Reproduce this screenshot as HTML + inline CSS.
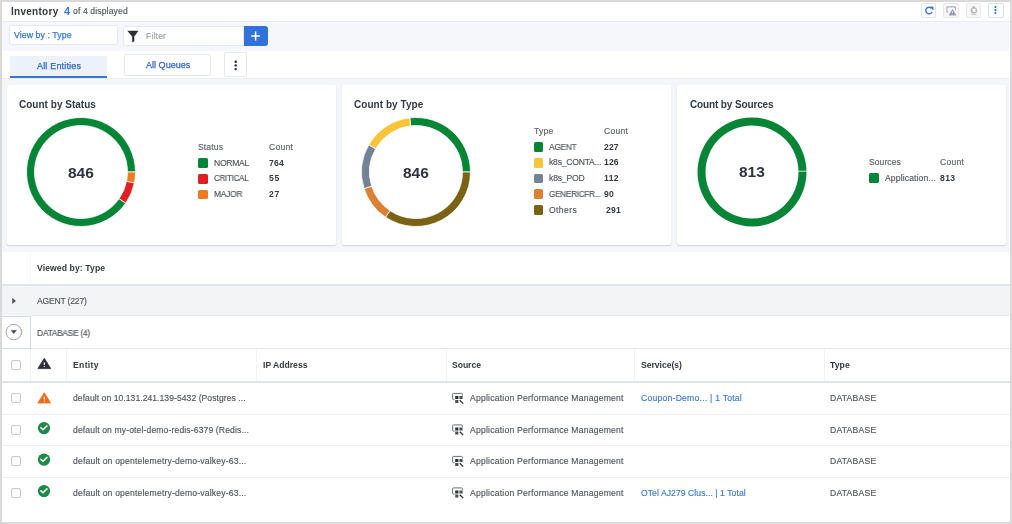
<!DOCTYPE html>
<html><head><meta charset="utf-8">
<style>
*{box-sizing:border-box;margin:0;padding:0}
html,body{width:1012px;height:524px;overflow:hidden;background:#d9d9d9;font-family:"Liberation Sans",sans-serif}
#app{position:absolute;left:2px;top:2px;width:1008px;height:520px;background:#fff;overflow:hidden}
.tx{position:absolute;line-height:1;white-space:nowrap;will-change:transform}
.bx{position:absolute}
</style></head>
<body>
<div id="app">
<div class="bx" style="left:0.00px;top:0.00px;width:1008.00px;height:19.00px;background:#fff"></div>
<div class="bx" style="left:0.00px;top:18.50px;width:1008.00px;height:1.00px;background:#e9ecf0"></div>
<div class="tx" style="left:8.80px;top:4.50px;font-size:10px;color:#333a44;font-weight:bold;letter-spacing:0.273px;">Inventory</div>
<div class="tx" style="left:61.70px;top:3.65px;font-size:11px;color:#3a78d6;font-weight:bold;">4</div>
<div class="tx" style="left:71.00px;top:5.49px;font-size:8.6px;color:#50565f;letter-spacing:0.125px;-webkit-text-stroke:0.15px #50565f;">of 4 displayed</div>
<div class="bx" style="left:919.30px;top:1.10px;width:15.20px;height:15.10px;border:1px solid #d9e4f7;border-radius:2px;background:#fff"></div>
<div class="bx" style="left:941.40px;top:1.10px;width:15.20px;height:15.10px;border:1px solid #e8e9eb;border-radius:2px;background:#f7f7f8"></div>
<div class="bx" style="left:964.20px;top:1.10px;width:15.20px;height:15.10px;border:1px solid #e8e9eb;border-radius:2px;background:#f7f7f8"></div>
<div class="bx" style="left:986.40px;top:1.10px;width:15.20px;height:15.10px;border:1px solid #d9e4f7;border-radius:2px;background:#fff"></div>
<div class="bx" style="left:0.00px;top:19.50px;width:1008.00px;height:29.50px;background:#f5f7fb"></div>
<div class="bx" style="left:7.30px;top:23.20px;width:108.50px;height:20.10px;background:#fff;border:1px solid #e6e9ee;border-radius:2px"></div>
<div class="tx" style="left:12.30px;top:28.72px;font-size:8.8px;color:#3a78d6;letter-spacing:0.053px;-webkit-text-stroke:0.25px #3a78d6">View by : Type</div>
<div class="bx" style="left:120.60px;top:24.00px;width:121.40px;height:19.80px;background:#fff;border:1px solid #e6e9ee;border-radius:2px 0 0 2px"></div>
<div class="tx" style="left:144.00px;top:29.99px;font-size:8.6px;color:#9ba1a9;letter-spacing:0.170px;-webkit-text-stroke:0.15px #9ba1a9;">Filter</div>
<div class="bx" style="left:241.70px;top:24.20px;width:23.90px;height:19.80px;background:#3372d9;border-radius:0 3px 3px 0"></div>
<div class="bx" style="left:0.00px;top:49.00px;width:1008.00px;height:27.00px;background:#fff"></div>
<div class="bx" style="left:8.30px;top:54.00px;width:96.80px;height:22.00px;background:#ecf1fa;border-bottom:2px solid #3a74d2"></div>
<div class="tx" style="left:35.00px;top:60.05px;font-size:9px;color:#2f65c4;letter-spacing:0.179px;-webkit-text-stroke:0.25px #2f65c4">All Entities</div>
<div class="bx" style="left:122.40px;top:51.60px;width:87.10px;height:22.20px;background:#fff;border:1px solid #e6e9ee;border-radius:2px"></div>
<div class="tx" style="left:144.20px;top:58.85px;font-size:9px;color:#2f65c4;letter-spacing:0.030px;-webkit-text-stroke:0.25px #2f65c4">All Queues</div>
<div class="bx" style="left:222.20px;top:50.40px;width:23.20px;height:24.40px;background:#fff;border:1px solid #e6e9ee;border-radius:2px"></div>
<div class="bx" style="left:0.00px;top:76.00px;width:1008.00px;height:174.00px;background:#f4f6fa"></div>
<div class="bx" style="left:0.00px;top:76.00px;width:1008.00px;height:1.20px;background:#eceef2"></div>
<div class="bx" style="left:5.00px;top:83.00px;width:329.00px;height:160.00px;background:#fff;border-radius:2px;box-shadow:0 1px 1.5px rgba(0,0,0,.15)"></div>
<div class="bx" style="left:340.00px;top:83.00px;width:329.00px;height:160.00px;background:#fff;border-radius:2px;box-shadow:0 1px 1.5px rgba(0,0,0,.15)"></div>
<div class="bx" style="left:675.00px;top:83.00px;width:329.00px;height:160.00px;background:#fff;border-radius:2px;box-shadow:0 1px 1.5px rgba(0,0,0,.15)"></div>
<div class="tx" style="left:17.20px;top:97.70px;font-size:10px;color:#333a44;font-weight:bold;letter-spacing:0.016px;">Count by Status</div>
<div class="tx" style="left:352.10px;top:97.70px;font-size:10px;color:#333a44;font-weight:bold;letter-spacing:0.041px;">Count by Type</div>
<div class="tx" style="left:687.50px;top:97.70px;font-size:10px;color:#333a44;font-weight:bold;letter-spacing:-0.132px;">Count by Sources</div>
<svg class="bx" style="left:18.50px;top:109.50px" width="120" height="120" viewBox="0 0 120 120"><path d="M104.70,91.18 A54.5,54.5 0 1 1 114.50,60.00 L106.50,60.00 A46.5,46.5 0 1 0 98.14,86.60 Z" fill="#068537" stroke="#fff" stroke-width="0.8"/>
<path d="M113.41,70.86 A54.5,54.5 0 0 1 104.70,91.18 L98.14,86.60 A46.5,46.5 0 0 0 105.57,69.26 Z" fill="#e01f22" stroke="#fff" stroke-width="0.8"/>
<path d="M114.50,60.00 A54.5,54.5 0 0 1 113.41,70.86 L105.57,69.26 A46.5,46.5 0 0 0 106.50,60.00 Z" fill="#f07a1e" stroke="#fff" stroke-width="0.8"/></svg>
<svg class="bx" style="left:353.60px;top:109.90px" width="120" height="120" viewBox="0 0 120 120"><path d="M53.74,5.86 A54.5,54.5 0 0 1 114.50,60.00 L106.50,60.00 A46.5,46.5 0 0 0 54.66,13.81 Z" fill="#068537" stroke="#fff" stroke-width="0.8"/>
<path d="M12.70,32.93 A54.5,54.5 0 0 1 53.74,5.86 L54.66,13.81 A46.5,46.5 0 0 0 19.64,36.90 Z" fill="#f8c53a" stroke="#fff" stroke-width="0.8"/>
<path d="M8.13,76.73 A54.5,54.5 0 0 1 12.70,32.93 L19.64,36.90 A46.5,46.5 0 0 0 15.74,74.27 Z" fill="#738396" stroke="#fff" stroke-width="0.8"/>
<path d="M29.66,105.27 A54.5,54.5 0 0 1 8.13,76.73 L15.74,74.27 A46.5,46.5 0 0 0 34.11,98.63 Z" fill="#dc8134" stroke="#fff" stroke-width="0.8"/>
<path d="M114.50,60.00 A54.5,54.5 0 0 1 29.66,105.27 L34.11,98.63 A46.5,46.5 0 0 0 106.50,60.00 Z" fill="#7a6314" stroke="#fff" stroke-width="0.8"/></svg>
<svg class="bx" style="left:689.50px;top:109.80px" width="120" height="120" viewBox="0 0 120 120"><path d="M114.50,60.00 A54.5,54.5 0 1 1 5.50,60.00 A54.5,54.5 0 1 1 114.50,60.00 Z M106.50,60.00 A46.5,46.5 0 1 0 13.50,60.00 A46.5,46.5 0 1 0 106.50,60.00 Z" fill="#068537" fill-rule="evenodd"/></svg>
<div class="tx" style="left:66.00px;top:162.72px;font-size:15.5px;color:#2d3340;font-weight:bold;">846</div>
<div class="tx" style="left:401.30px;top:163.12px;font-size:15.5px;color:#2d3340;font-weight:bold;">846</div>
<div class="tx" style="left:736.60px;top:162.32px;font-size:15.5px;color:#2d3340;font-weight:bold;">813</div>
<div class="tx" style="left:196.00px;top:140.69px;font-size:8.6px;color:#5c626a;letter-spacing:0.117px;-webkit-text-stroke:0.15px #5c626a;">Status</div>
<div class="tx" style="left:266.90px;top:140.69px;font-size:8.6px;color:#5c626a;letter-spacing:0.256px;-webkit-text-stroke:0.15px #5c626a;">Count</div>
<div class="bx" style="left:196.00px;top:155.90px;width:9.90px;height:9.90px;background:#068537;border-radius:1.5px"></div>
<div class="tx" style="left:211.80px;top:156.59px;font-size:8.6px;color:#50565f;letter-spacing:-0.284px;-webkit-text-stroke:0.15px #50565f;">NORMAL</div>
<div class="tx" style="left:266.90px;top:156.59px;font-size:8.6px;color:#333a44;font-weight:bold;letter-spacing:0.258px;">764</div>
<div class="bx" style="left:196.00px;top:171.70px;width:9.90px;height:9.90px;background:#e01f22;border-radius:1.5px"></div>
<div class="tx" style="left:211.80px;top:172.39px;font-size:8.6px;color:#50565f;letter-spacing:-0.300px;transform:scaleX(0.937);transform-origin:0 0;-webkit-text-stroke:0.15px #50565f;">CRITICAL</div>
<div class="tx" style="left:266.90px;top:172.39px;font-size:8.6px;color:#333a44;font-weight:bold;letter-spacing:0.598px;">55</div>
<div class="bx" style="left:196.00px;top:187.50px;width:9.90px;height:9.90px;background:#f07a1e;border-radius:1.5px"></div>
<div class="tx" style="left:211.80px;top:188.19px;font-size:8.6px;color:#50565f;letter-spacing:-0.300px;transform:scaleX(0.985);transform-origin:0 0;-webkit-text-stroke:0.15px #50565f;">MAJOR</div>
<div class="tx" style="left:266.90px;top:188.19px;font-size:8.6px;color:#333a44;font-weight:bold;letter-spacing:0.598px;">27</div>
<div class="tx" style="left:531.60px;top:124.69px;font-size:8.6px;color:#5c626a;letter-spacing:0.240px;-webkit-text-stroke:0.15px #5c626a;">Type</div>
<div class="tx" style="left:602.30px;top:124.69px;font-size:8.6px;color:#5c626a;letter-spacing:0.256px;-webkit-text-stroke:0.15px #5c626a;">Count</div>
<div class="bx" style="left:531.60px;top:139.90px;width:9.90px;height:9.90px;background:#068537;border-radius:1.5px"></div>
<div class="tx" style="left:547.40px;top:140.59px;font-size:8.6px;color:#50565f;letter-spacing:-0.300px;transform:scaleX(0.976);transform-origin:0 0;-webkit-text-stroke:0.15px #50565f;">AGENT</div>
<div class="tx" style="left:602.30px;top:140.59px;font-size:8.6px;color:#333a44;font-weight:bold;letter-spacing:0.108px;">227</div>
<div class="bx" style="left:531.60px;top:155.70px;width:9.90px;height:9.90px;background:#f8c53a;border-radius:1.5px"></div>
<div class="tx" style="left:547.40px;top:156.39px;font-size:8.6px;color:#50565f;letter-spacing:-0.219px;-webkit-text-stroke:0.15px #50565f;">k8s_CONTA...</div>
<div class="tx" style="left:602.30px;top:156.39px;font-size:8.6px;color:#333a44;font-weight:bold;letter-spacing:0.108px;">126</div>
<div class="bx" style="left:531.60px;top:171.50px;width:9.90px;height:9.90px;background:#738396;border-radius:1.5px"></div>
<div class="tx" style="left:547.40px;top:172.19px;font-size:8.6px;color:#50565f;letter-spacing:-0.170px;-webkit-text-stroke:0.15px #50565f;">k8s_POD</div>
<div class="tx" style="left:602.30px;top:172.19px;font-size:8.6px;color:#333a44;font-weight:bold;letter-spacing:0.342px;">112</div>
<div class="bx" style="left:531.60px;top:187.30px;width:9.90px;height:9.90px;background:#dc8134;border-radius:1.5px"></div>
<div class="tx" style="left:547.40px;top:187.99px;font-size:8.6px;color:#50565f;letter-spacing:-0.300px;transform:scaleX(0.953);transform-origin:0 0;-webkit-text-stroke:0.15px #50565f;">GENERICFR...</div>
<div class="tx" style="left:602.30px;top:187.99px;font-size:8.6px;color:#333a44;font-weight:bold;letter-spacing:0.197px;">90</div>
<div class="bx" style="left:531.60px;top:203.10px;width:9.90px;height:9.90px;background:#7a6314;border-radius:1.5px"></div>
<div class="tx" style="left:547.40px;top:203.79px;font-size:8.6px;color:#50565f;letter-spacing:0.393px;-webkit-text-stroke:0.15px #50565f;">Others</div>
<div class="tx" style="left:603.60px;top:203.79px;font-size:8.6px;color:#333a44;font-weight:bold;letter-spacing:0.208px;">291</div>
<div class="tx" style="left:867.00px;top:156.09px;font-size:8.6px;color:#5c626a;letter-spacing:0.055px;-webkit-text-stroke:0.15px #5c626a;">Sources</div>
<div class="tx" style="left:937.70px;top:156.09px;font-size:8.6px;color:#5c626a;letter-spacing:0.256px;-webkit-text-stroke:0.15px #5c626a;">Count</div>
<div class="bx" style="left:867.00px;top:171.30px;width:9.90px;height:9.90px;background:#068537;border-radius:1.5px"></div>
<div class="tx" style="left:882.80px;top:171.99px;font-size:8.6px;color:#50565f;letter-spacing:0.126px;-webkit-text-stroke:0.15px #50565f;">Application...</div>
<div class="tx" style="left:937.70px;top:171.99px;font-size:8.6px;color:#333a44;font-weight:bold;letter-spacing:0.358px;">813</div>
<div class="bx" style="left:0.00px;top:250.00px;width:1008.00px;height:270.00px;background:#fff"></div>
<div class="bx" style="left:28.00px;top:250.00px;width:1.00px;height:31.00px;background:#f5f6f8"></div>
<div class="tx" style="left:35.00px;top:262.09px;font-size:8.6px;color:#333a44;font-weight:bold;letter-spacing:0.108px;">Viewed by: Type</div>
<div class="bx" style="left:0.00px;top:281.80px;width:1008.00px;height:1.80px;background:#e1e4e9"></div>
<div class="bx" style="left:0.00px;top:283.50px;width:1008.00px;height:30.50px;background:#f3f4f6"></div>
<div class="bx" style="left:29.00px;top:313.40px;width:979.00px;height:1.00px;background:#e9ebef"></div>
<div class="tx" style="left:35.00px;top:295.19px;font-size:8.6px;color:#50565f;letter-spacing:-0.205px;-webkit-text-stroke:0.15px #50565f;">AGENT (227)</div>
<div class="bx" style="left:0.00px;top:346.00px;width:1008.00px;height:1.00px;background:#e3e7ee"></div>
<div class="bx" style="left:0.00px;top:314.00px;width:29.00px;height:33.00px;border:1px solid #cfdcf3;border-left:none"></div>
<div class="tx" style="left:35.00px;top:326.89px;font-size:8.6px;color:#50565f;letter-spacing:-0.300px;transform:scaleX(0.983);transform-origin:0 0;-webkit-text-stroke:0.15px #50565f;">DATABASE (4)</div>
<div class="bx" style="left:3.70px;top:322.00px;width:16.00px;height:16.00px;border:1px solid #8d939b;border-radius:50%;background:#fff"></div>
<div class="bx" style="left:28.00px;top:347.00px;width:1.00px;height:32.00px;background:#eff1f4"></div>
<div class="bx" style="left:64.00px;top:347.00px;width:1.00px;height:32.00px;background:#eff1f4"></div>
<div class="bx" style="left:253.50px;top:347.00px;width:1.00px;height:32.00px;background:#eff1f4"></div>
<div class="bx" style="left:443.50px;top:347.00px;width:1.00px;height:32.00px;background:#eff1f4"></div>
<div class="bx" style="left:632.30px;top:347.00px;width:1.00px;height:32.00px;background:#eff1f4"></div>
<div class="bx" style="left:821.50px;top:347.00px;width:1.00px;height:32.00px;background:#eff1f4"></div>
<div class="bx" style="left:0.00px;top:379.00px;width:1008.00px;height:2.00px;background:#e1e4e9"></div>
<div class="bx" style="left:8.70px;top:358.40px;width:10.00px;height:10.00px;border:1px solid #c6cad2;border-radius:2px;background:#fff"></div>
<div class="tx" style="left:71.40px;top:359.09px;font-size:8.6px;color:#333a44;font-weight:bold;letter-spacing:0.337px;">Entity</div>
<div class="tx" style="left:260.90px;top:359.09px;font-size:8.6px;color:#333a44;font-weight:bold;letter-spacing:0.004px;">IP Address</div>
<div class="tx" style="left:449.80px;top:359.09px;font-size:8.6px;color:#333a44;font-weight:bold;letter-spacing:-0.036px;">Source</div>
<div class="tx" style="left:638.80px;top:359.09px;font-size:8.6px;color:#333a44;font-weight:bold;letter-spacing:-0.026px;">Service(s)</div>
<div class="tx" style="left:828.40px;top:359.09px;font-size:8.6px;color:#333a44;font-weight:bold;letter-spacing:0.113px;">Type</div>
<div class="bx" style="left:8.70px;top:391.20px;width:10.00px;height:10.00px;border:1px solid #c6cad2;border-radius:2px;background:#fff"></div>
<div class="tx" style="left:71.40px;top:392.29px;font-size:8.6px;color:#50565f;letter-spacing:0.046px;-webkit-text-stroke:0.15px #50565f;">default on 10.131.241.139-5432 (Postgres ...</div>
<div class="tx" style="left:468.00px;top:392.29px;font-size:8.6px;color:#50565f;letter-spacing:0.220px;-webkit-text-stroke:0.15px #50565f;">Application Performance Management</div>
<div class="tx" style="left:638.50px;top:392.29px;font-size:8.6px;color:#3a78d6;letter-spacing:0.240px;-webkit-text-stroke:0.15px #3a78d6;">Coupon-Demo... | 1 Total</div>
<div class="tx" style="left:827.90px;top:392.29px;font-size:8.6px;color:#50565f;letter-spacing:0.226px;-webkit-text-stroke:0.15px #50565f;">DATABASE</div>
<div class="bx" style="left:0.00px;top:411.50px;width:1008.00px;height:1.00px;background:#eceef2"></div>
<div class="bx" style="left:8.70px;top:422.70px;width:10.00px;height:10.00px;border:1px solid #c6cad2;border-radius:2px;background:#fff"></div>
<div class="tx" style="left:71.40px;top:423.79px;font-size:8.6px;color:#50565f;letter-spacing:0.124px;-webkit-text-stroke:0.15px #50565f;">default on my-otel-demo-redis-6379 (Redis...</div>
<div class="tx" style="left:468.00px;top:423.79px;font-size:8.6px;color:#50565f;letter-spacing:0.220px;-webkit-text-stroke:0.15px #50565f;">Application Performance Management</div>
<div class="tx" style="left:827.90px;top:423.79px;font-size:8.6px;color:#50565f;letter-spacing:0.226px;-webkit-text-stroke:0.15px #50565f;">DATABASE</div>
<div class="bx" style="left:0.00px;top:443.00px;width:1008.00px;height:1.00px;background:#eceef2"></div>
<div class="bx" style="left:8.70px;top:454.20px;width:10.00px;height:10.00px;border:1px solid #c6cad2;border-radius:2px;background:#fff"></div>
<div class="tx" style="left:71.40px;top:455.29px;font-size:8.6px;color:#50565f;letter-spacing:0.183px;-webkit-text-stroke:0.15px #50565f;">default on opentelemetry-demo-valkey-63...</div>
<div class="tx" style="left:468.00px;top:455.29px;font-size:8.6px;color:#50565f;letter-spacing:0.220px;-webkit-text-stroke:0.15px #50565f;">Application Performance Management</div>
<div class="tx" style="left:827.90px;top:455.29px;font-size:8.6px;color:#50565f;letter-spacing:0.226px;-webkit-text-stroke:0.15px #50565f;">DATABASE</div>
<div class="bx" style="left:0.00px;top:474.50px;width:1008.00px;height:1.00px;background:#eceef2"></div>
<div class="bx" style="left:8.70px;top:485.70px;width:10.00px;height:10.00px;border:1px solid #c6cad2;border-radius:2px;background:#fff"></div>
<div class="tx" style="left:71.40px;top:486.79px;font-size:8.6px;color:#50565f;letter-spacing:0.183px;-webkit-text-stroke:0.15px #50565f;">default on opentelemetry-demo-valkey-63...</div>
<div class="tx" style="left:468.00px;top:486.79px;font-size:8.6px;color:#50565f;letter-spacing:0.220px;-webkit-text-stroke:0.15px #50565f;">Application Performance Management</div>
<div class="tx" style="left:638.50px;top:486.79px;font-size:8.6px;color:#3a78d6;letter-spacing:0.066px;-webkit-text-stroke:0.15px #3a78d6;">OTel AJ279 Clus... | 1 Total</div>
<div class="tx" style="left:827.90px;top:486.79px;font-size:8.6px;color:#50565f;letter-spacing:0.226px;-webkit-text-stroke:0.15px #50565f;">DATABASE</div>

</div>
<svg style="position:absolute;left:0;top:0" width="1012" height="524" viewBox="0 0 1012 524"><path d="M931.4,8.2 A3.3,3.3 0 1 0 932.1,11.9" fill="none" stroke="#3a78d6" stroke-width="1.4"/><path d="M930.2,6.9 L933.2,6.9 L933.2,9.9 Z" fill="#3a78d6" stroke="#3a78d6" stroke-width="0.6" stroke-linejoin="round"/><path d="M948.4,12.3 L947.4,12.3 Q946.9,12.3 946.9,11.8 L946.9,7.4 Q946.9,6.9 947.4,6.9 L955.1,6.9 Q955.6,6.9 955.6,7.4 L955.6,10.2" fill="none" stroke="#aeb2b8" stroke-width="1.1"/><path d="M952.5,9.2 L956.1,15.2 L948.9,15.2 Z" fill="#969ca4" stroke="#969ca4" stroke-width="0.4" stroke-linejoin="round"/><path d="M952.5,11.2 L952.5,13" stroke="#f4f4f5" stroke-width="0.8"/><circle cx="952.5" cy="14.1" r="0.45" fill="#f4f4f5"/><circle cx="973.9" cy="10.4" r="2.5" fill="none" stroke="#b4b8be" stroke-width="1.3"/><path d="M971.2,9.2 Q971.6,12.6 974.4,13" fill="none" stroke="#a8acb2" stroke-width="1.1"/><circle cx="973.5" cy="7" r="1.1" fill="#aeb2b8"/><path d="M971,14.6 L976.6,14.6" stroke="#c4c7cc" stroke-width="0.9"/><circle cx="995.5" cy="7.1" r="1.05" fill="#2f6fd8"/><circle cx="995.5" cy="10.1" r="1.05" fill="#2f6fd8"/><circle cx="995.5" cy="13.1" r="1.05" fill="#2f6fd8"/><path d="M127.7,30.9 L138.1,30.9 L134.1,36.6 L134.1,41.2 L132.3,42.1 L132.3,36.6 Z" fill="#2a2f38" stroke="#2a2f38" stroke-width="0.4" stroke-linejoin="round"/><path d="M255.6,31.6 L255.6,40.4 M251.2,36 L260,36" stroke="#fff" stroke-width="1.5"/><circle cx="235.7" cy="61.7" r="1.2" fill="#1d2129"/><circle cx="235.7" cy="65.4" r="1.2" fill="#1d2129"/><circle cx="235.7" cy="69.1" r="1.2" fill="#1d2129"/><path d="M12.2,297.8 L16,300.9 L12.2,304 Z" fill="#505660"/><circle cx="13.8" cy="332.1" r="7.7" fill="#fff" stroke="#a9adb3" stroke-width="1"/><path d="M11.2,330.4 L16.4,330.4 L13.8,333.5 Z" fill="#3d434c" stroke="#3d434c" stroke-width="0.5" stroke-linejoin="round"/><path d="M44.3,358.3 L50.7,368.6 L37.9,368.6 Z" fill="#2a2f38" stroke="#2a2f38" stroke-width="0.8" stroke-linejoin="round"/><path d="M44.3,362.3 L44.3,364.90000000000003" stroke="#fff" stroke-width="1.15"/><circle cx="44.3" cy="366.6" r="0.65" fill="#fff"/><path d="M44.3,392.8 L50.7,403.0 L37.9,403.0 Z" fill="#f26b1d" stroke="#f26b1d" stroke-width="0.8" stroke-linejoin="round"/><path d="M44.3,396.8 L44.3,399.40000000000003" stroke="#fff" stroke-width="1.15"/><circle cx="44.3" cy="401.1" r="0.65" fill="#fff"/><circle cx="44" cy="428.1" r="6.1" fill="#1a8a45"/><path d="M40.8,427.7 L43,429.8 L47,425.9" fill="none" stroke="#fff" stroke-width="1.5" stroke-linecap="round" stroke-linejoin="round"/><circle cx="44" cy="459.6" r="6.1" fill="#1a8a45"/><path d="M40.8,459.2 L43,461.3 L47,457.4" fill="none" stroke="#fff" stroke-width="1.5" stroke-linecap="round" stroke-linejoin="round"/><circle cx="44" cy="491.1" r="6.1" fill="#1a8a45"/><path d="M40.8,490.7 L43,492.8 L47,488.9" fill="none" stroke="#fff" stroke-width="1.5" stroke-linecap="round" stroke-linejoin="round"/><path d="M454.6,399.6 L453.4,399.6 Q452.6,399.6 452.6,398.8 L452.6,394.2 Q452.6,393.4 453.4,393.4 L461.6,393.4 Q462.4,393.4 462.4,394.2 L462.4,395.5" fill="none" stroke="#6a7078" stroke-width="1"/><rect x="455.2" y="396.0" width="3.2" height="3" fill="#2a2f38"/><rect x="459.4" y="396.0" width="3.2" height="3" fill="#4a5058"/><rect x="455.2" y="400.0" width="3.2" height="3" fill="#4a5058"/><path d="M459.8,400.2 L463.2,403.6" stroke="#2a2f38" stroke-width="1.3"/><path d="M454.6,431.1 L453.4,431.1 Q452.6,431.1 452.6,430.3 L452.6,425.7 Q452.6,424.9 453.4,424.9 L461.6,424.9 Q462.4,424.9 462.4,425.7 L462.4,427.0" fill="none" stroke="#6a7078" stroke-width="1"/><rect x="455.2" y="427.5" width="3.2" height="3" fill="#2a2f38"/><rect x="459.4" y="427.5" width="3.2" height="3" fill="#4a5058"/><rect x="455.2" y="431.5" width="3.2" height="3" fill="#4a5058"/><path d="M459.8,431.7 L463.2,435.1" stroke="#2a2f38" stroke-width="1.3"/><path d="M454.6,462.6 L453.4,462.6 Q452.6,462.6 452.6,461.8 L452.6,457.2 Q452.6,456.4 453.4,456.4 L461.6,456.4 Q462.4,456.4 462.4,457.2 L462.4,458.5" fill="none" stroke="#6a7078" stroke-width="1"/><rect x="455.2" y="459.0" width="3.2" height="3" fill="#2a2f38"/><rect x="459.4" y="459.0" width="3.2" height="3" fill="#4a5058"/><rect x="455.2" y="463.0" width="3.2" height="3" fill="#4a5058"/><path d="M459.8,463.2 L463.2,466.6" stroke="#2a2f38" stroke-width="1.3"/><path d="M454.6,494.1 L453.4,494.1 Q452.6,494.1 452.6,493.3 L452.6,488.7 Q452.6,487.9 453.4,487.9 L461.6,487.9 Q462.4,487.9 462.4,488.7 L462.4,490.0" fill="none" stroke="#6a7078" stroke-width="1"/><rect x="455.2" y="490.5" width="3.2" height="3" fill="#2a2f38"/><rect x="459.4" y="490.5" width="3.2" height="3" fill="#4a5058"/><rect x="455.2" y="494.5" width="3.2" height="3" fill="#4a5058"/><path d="M459.8,494.7 L463.2,498.1" stroke="#2a2f38" stroke-width="1.3"/><path d="M796.5,171.2 L807,171.2" stroke="#fff" stroke-width="0.8"/></svg>
</body></html>
